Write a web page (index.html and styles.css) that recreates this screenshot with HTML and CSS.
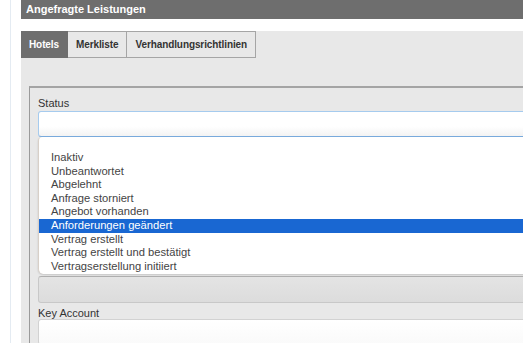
FILE: index.html
```html
<!DOCTYPE html>
<html lang="de">
<head>
    <meta charset="UTF-8">
    <title>Angefragte Leistungen</title>
    <link rel="stylesheet" href="styles.css">
</head>
<body>
    <div id="page">
        <div class="head">Angefragte Leistungen</div>

        <div class="panel">
            <div class="tabs">
                <div class="tab active">Hotels</div>
                <div class="tab">Merkliste</div>
                <div class="tab">Verhandlungsrichtlinien</div>
            </div>

            <div class="box">
                <div class="field">
                    <label>Status</label>
                    <div class="input focus"></div>
                    <ul class="dropdown">
                        <li>Inaktiv</li>
                        <li>Unbeantwortet</li>
                        <li>Abgelehnt</li>
                        <li>Anfrage storniert</li>
                        <li>Angebot vorhanden</li>
                        <li class="selected">Anforderungen geändert</li>
                        <li>Vertrag erstellt</li>
                        <li>Vertrag erstellt und bestätigt</li>
                        <li>Vertragserstellung initiiert</li>
                    </ul>
                </div>
                <div class="input disabled"></div>
                <div class="field account">
                    <label>Key Account</label>
                    <div class="input"></div>
                </div>
            </div>
        </div>
    </div>
</body>
</html>
```

FILE: styles.css
```css
html, body {
    margin: 0;
    overflow: hidden;
    background: #fff;
    font-family: "Liberation Sans", Arial, sans-serif;
}

#page {
    width: 620px;
    height: 343px;
    margin-left: 10px;
    border-left: 1px solid #e4ebf2;
    padding-left: 10px;
}

.head {
    height: 19px;
    line-height: 19px;
    background: #6e6e6e;
    color: #fff;
    font-weight: bold;
    font-size: 11px;
    padding-left: 5px;
}

.panel {
    margin-top: 12px;
    background: #e8e8e8;
    height: 320px;
}

.tabs {
    display: flex;
    height: 27px;
}
.tab {
    box-sizing: border-box;
    height: 27px;
    line-height: 25px;
    padding: 0 8px;
    border: 1px solid #a5a5a5;
    border-left: none;
    font-size: 10px;
    font-weight: bold;
    letter-spacing: -0.1px;
    color: #333;
    background: #e8e8e8;
}
.tab.active {
    background: #6e6e6e;
    border-color: #6e6e6e;
    color: #fff;
}

.box {
    margin: 28px 0 0 8px;
    border-top: 2px solid #a4a4a4;
    border-left: 1px solid #9a9a9a;
    padding: 8px 0 0 8px;
}

.field {
    position: relative;
}
.field.account {
    margin-top: 3px;
}
label {
    display: block;
    font-size: 11px;
    color: #333;
    height: 15px;
    line-height: 14px;
}
.account label {
    height: 13px;
}

.input {
    box-sizing: border-box;
    height: 26px;
    border: 1px solid #d2d2d2;
    border-radius: 3px;
    background: linear-gradient(#fff, #fafafa);
}
.input.focus {
    border: 1px solid #a6cbee;
    border-bottom-color: #7aacde;
    background: linear-gradient(#fff 60%, #f3f3f3);
}
.input.disabled {
    margin-top: 139px;
    height: 27px;
    border-color: #c8c8c8;
    border-top-color: #b0b0b0;
    background: linear-gradient(#e4e4e4, #dcdcdc);
}

.dropdown {
    position: absolute;
    top: 41px;
    left: 0;
    right: 0;
    margin: 0;
    padding: 14px 0 0 0;
    height: 123px;
    list-style: none;
    background: #fff;
    border-left: 1px solid #d8d0c8;
    border-radius: 4px 0 0 5px;
    box-shadow: 0 1px 2px rgba(0, 0, 0, 0.15);
    font-size: 11.2px;
    color: #444;
}
.dropdown li {
    height: 13.6px;
    line-height: 13.6px;
    padding-left: 12px;
    white-space: nowrap;
}
.dropdown li.selected {
    background: #1967d2;
    color: #fff;
}
```
